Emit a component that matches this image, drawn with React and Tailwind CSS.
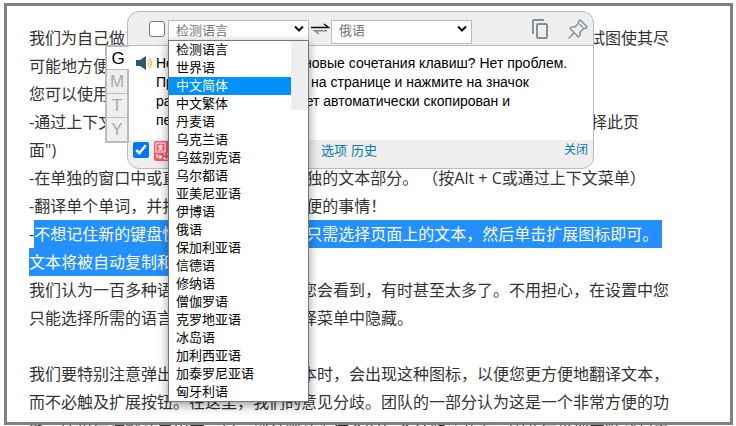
import React from "react";

const article = [
  "我们为自己做了这个扩展程序，所以我们考虑到了其中每一个小小的细节，并且试图使其尽",
  "可能地方便使用。这是一款简单而实用的翻译工具。",
  "您可以使用以下几种方式来翻译文本：",
  "-通过上下文菜单来翻译整个页面（在页面上单击一下鼠标右键，然后\"菜单中\"选择此页",
  "面\")",
  "-在单独的窗口中或直接在页面上翻译单独的文本部分。 （按Alt + C或通过上下文菜单）",
  "-翻译单个单词，并打开窗口查看也很方便的事情！",
];

const rest = [
  "我们认为一百多种语言已经足够。但是您会看到，有时甚至太多了。不用担心，在设置中您",
  "只能选择所需的语言，其余的语言从选择菜单中隐藏。",
  "\u00a0",
  "我们要特别注意弹出图标。当您选择文本时，会出现这种图标，以便您更方便地翻译文本，",
  "而不必触及扩展按钮。在这里，我们的意见分歧。团队的一部分认为这是一个非常方便的功",
  "能，所以应该默认启用它。另一部分则认为这个图标会分散注意力，因此应当把它隐藏起来",
];

const languages = [
  "检测语言", "世界语", "中文简体", "中文繁体", "丹麦语", "乌克兰语", "乌兹别克语",
  "乌尔都语", "亚美尼亚语", "伊博语", "俄语", "保加利亚语", "信德语", "修纳语",
  "僧伽罗语", "克罗地亚语", "冰岛语", "加利西亚语", "加泰罗尼亚语", "匈牙利语",
];

function Chevron() {
  return (
    <svg className="pointer-events-none absolute right-[5px] top-2" width="10" height="8" viewBox="0 0 10 8" fill="none" stroke="#111" strokeWidth="2">
      <path d="M1 1.5 5 5.5 9 1.5" />
    </svg>
  );
}

function LanguageSelect({ label, options }) {
  return (
    <div className="relative h-6 w-[141px]">
      <select aria-label={label} className="h-full w-full appearance-none border border-[#bbb] bg-white pb-[3px] pl-[7px] text-[13px] text-[#777] outline-none">
        {options.map((o) => <option key={o}>{o}</option>)}
      </select>
      <Chevron />
    </div>
  );
}

function Tabs() {
  return (
    <div role="tablist" className="absolute -left-[23px] top-[33px] flex w-[24px] flex-col border-2 border-r-0 border-[#bbb] font-['Liberation_Sans',Arial,sans-serif] text-[17px] leading-6">
      <button role="tab" aria-selected="true" className="h-[22px] bg-white text-black">G</button>
      {["M", "T", "Y"].map((t) => (
        <button key={t} role="tab" aria-selected="false" className="h-6 border-r-2 border-t border-[#bbb] bg-[#eee] text-[#aaa]">{t}</button>
      ))}
    </div>
  );
}

function LanguageMenu() {
  return (
    <div className="absolute left-10 top-7 z-10 flex w-[141px] border border-[#777] bg-white shadow-[0_3px_10px_rgba(0,0,0,0.4)]">
      <ul role="listbox" className="flex-1 text-[13px] leading-4 text-black">
        {languages.map((l) => (
          <li key={l} role="option" aria-selected={l === "中文简体"} className="h-[18px] whitespace-nowrap pl-[7px] aria-selected:bg-[#0090ff] aria-selected:text-white">{l}</li>
        ))}
      </ul>
      <div className="h-[69px] w-[17px] bg-[#eee]" />
    </div>
  );
}

function Popup() {
  return (
    <section className="absolute left-[127px] top-[11px] w-[467px] rounded-xl border border-[#bbb] bg-[#eee]">
      <header className="flex h-[34px] items-center border-b border-[#bbb] pl-[21px] pr-[5px]">
        <input type="checkbox" aria-label="启用" className="mr-[3px] size-4 appearance-none rounded-[3px] border border-[#777] bg-white" />
        <LanguageSelect label="源语言" options={["检测语言", "俄语"]} />
        <button aria-label="交换语言" className="mx-px">
          <svg width="20" height="12" viewBox="0 0 20 12" fill="none" strokeWidth="1.4">
            <path d="M1 4.5H18.500L14 1" stroke="#111" />
            <path d="M17 7.700H4.500L9 11" stroke="#888" />
          </svg>
        </button>
        <LanguageSelect label="目标语言" options={["俄语", "检测语言"]} />
        <button aria-label="复制" className="ml-auto mr-5">
          <svg width="16" height="20" viewBox="0 0 16 20" fill="none" stroke="#82919f" strokeWidth="2">
            <path d="M1 15V2Q1 1 2 1H12" />
            <rect x="5" y="5" width="10" height="14" rx="1" />
          </svg>
        </button>
        <button aria-label="固定">
          <svg width="20" height="20" viewBox="0 0 20 20" fill="none" stroke="#82919f" strokeWidth="1.5" strokeLinejoin="round" strokeLinecap="round">
            <path d="M12.200 1 19 7.800Q18.500 9.800 15.800 9.400L12 13.200Q13 16 10.500 18L2 9.500Q4 7 6.800 8L10.600 4.200Q10.200 1.500 12.200 1Z" />
            <path d="M6 14 1 19M12 5.500 14.500 8" />
          </svg>
        </button>
      </header>
      <div className="flex h-[94px] bg-white pl-2 pt-2">
        <button aria-label="朗读" className="mr-1 mt-[2px] h-[14px]">
          <svg width="16" height="14" viewBox="0 0 16 14" fill="none">
            <path d="M0 4H4L10 0V14L4 10H0Z" fill="#2d5c68" />
            <path d="M12 4Q14 7 12 10M13.500 2Q17.500 7 13.500 12" stroke="#f4bd3d" strokeWidth="1.300" />
          </svg>
        </button>
        <p className="whitespace-nowrap font-['Liberation_Sans',Arial,sans-serif] text-sm leading-[19px] text-black">
          Не хотите запоминать новые сочетания клавиш? Нет проблем.<br />
          Просто выделите текст на странице и нажмите на значок<br />
          расширения. Текст будет автоматически скопирован и<br />
          переведен.
        </p>
      </div>
      <footer className="flex h-7 items-start px-[5px] text-[13px] leading-5 text-[#0779ad]">
        <input type="checkbox" defaultChecked aria-label="自动翻译" className="mt-[2px] size-4 accent-[#0075ff]" />
        <svg className="ml-[5px] mt-px" width="20" height="20" viewBox="0 0 20 20">
          <rect width="20" height="20" rx="2" fill="#fa5567" />
          <path d="M2 2H11V11H2ZM4 5H9M6.500 3.500V5M4.500 9.500 8.500 5.500M4.500 5.500 8.500 9.500M3 13V16H7M5.500 14 7.500 16 5.500 18M10 13 11 14M10 16V18L18 18M13 13H18V16" fill="none" stroke="#fff" strokeWidth="1.100" />
        </svg>
        <nav className="ml-[147px] flex gap-1">
          <a href="#options">选项</a>
          <a href="#history">历史</a>
        </nav>
        <a href="#close" className="ml-auto text-xs leading-5">关闭</a>
      </footer>
      <Tabs />
      <LanguageMenu />
    </section>
  );
}

export default function App() {
  return (
    <main className="relative h-screen overflow-hidden bg-white font-['Open_Sans','Noto_Sans_CJK_SC',sans-serif]">
      <article className="whitespace-nowrap pl-[29px] pt-6 text-base leading-7 text-[#333]">
        {article.map((line, i) => <p key={i} className="h-7">{line}</p>)}
        <p className="h-7">-<mark className="inline-block h-7 whitespace-pre bg-[#2490ff] text-white">{"不想记住新的键盘快捷键？没有问题。只需选择页面上的文本，然后单击扩展图标即可。 "}</mark></p>
        <p className="h-7"><mark className="inline-block h-7 bg-[#2490ff] text-white">文本将被自动复制和翻译。</mark></p>
        {rest.map((line, i) => <p key={i} className="h-7">{line}</p>)}
      </article>
      <div className="pointer-events-none absolute bottom-px left-1 right-[3px] top-[3px] border-3 border-[#808080]" />
      <Popup />
    </main>
  );
}
